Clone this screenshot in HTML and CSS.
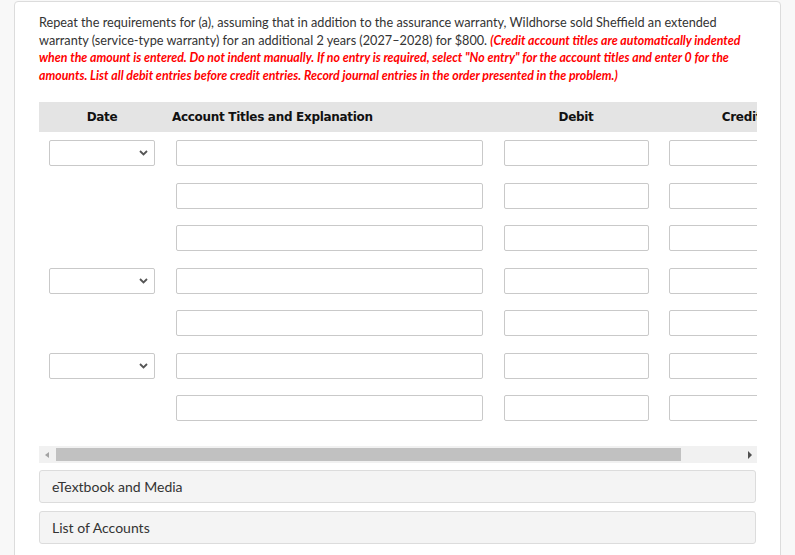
FILE: index.html
```html
<!DOCTYPE html>
<html>
<head>
<meta charset="utf-8">
<link rel="stylesheet" href="styles.css">
</head>
<body>
<div class="card">
  <p class="question">Repeat the requirements for (a), assuming that in addition to the assurance warranty, Wildhorse sold Sheffield an extended warranty (service-type warranty) for an additional 2 years (2027–2028) for $800. <span class="note">(Credit account titles are automatically indented when the amount is entered. Do not indent manually. If no entry is required, select "No entry" for the account titles and enter 0 for the amounts. List all debit entries before credit entries. Record journal entries in the order presented in the problem.)</span></p>

  <div class="scroller">
    <div class="journal">
      <div class="head">
        <div class="h-date">Date</div>
        <div class="h-acct">Account Titles and Explanation</div>
        <div class="h-debit">Debit</div>
        <div class="h-credit">Credit</div>
      </div>
      <div class="rows">
        <div class="row">
          <div class="c-date"><div class="select"><svg class="chev" width="9" height="6" viewBox="0 0 9 6"><path d="M1 1l3.5 3.5L8 1" fill="none" stroke="#555" stroke-width="1.8"/></svg></div></div>
          <div class="c-acct"><div class="field acct"></div></div>
          <div class="c-debit"><div class="field amt"></div></div>
          <div class="c-credit"><div class="field amt"></div></div>
        </div>
        <div class="row">
          <div class="c-date"></div>
          <div class="c-acct"><div class="field acct"></div></div>
          <div class="c-debit"><div class="field amt"></div></div>
          <div class="c-credit"><div class="field amt"></div></div>
        </div>
        <div class="row">
          <div class="c-date"></div>
          <div class="c-acct"><div class="field acct"></div></div>
          <div class="c-debit"><div class="field amt"></div></div>
          <div class="c-credit"><div class="field amt"></div></div>
        </div>
        <div class="row">
          <div class="c-date"><div class="select"><svg class="chev" width="9" height="6" viewBox="0 0 9 6"><path d="M1 1l3.5 3.5L8 1" fill="none" stroke="#555" stroke-width="1.8"/></svg></div></div>
          <div class="c-acct"><div class="field acct"></div></div>
          <div class="c-debit"><div class="field amt"></div></div>
          <div class="c-credit"><div class="field amt"></div></div>
        </div>
        <div class="row">
          <div class="c-date"></div>
          <div class="c-acct"><div class="field acct"></div></div>
          <div class="c-debit"><div class="field amt"></div></div>
          <div class="c-credit"><div class="field amt"></div></div>
        </div>
        <div class="row">
          <div class="c-date"><div class="select"><svg class="chev" width="9" height="6" viewBox="0 0 9 6"><path d="M1 1l3.5 3.5L8 1" fill="none" stroke="#555" stroke-width="1.8"/></svg></div></div>
          <div class="c-acct"><div class="field acct"></div></div>
          <div class="c-debit"><div class="field amt"></div></div>
          <div class="c-credit"><div class="field amt"></div></div>
        </div>
        <div class="row">
          <div class="c-date"></div>
          <div class="c-acct"><div class="field acct"></div></div>
          <div class="c-debit"><div class="field amt"></div></div>
          <div class="c-credit"><div class="field amt"></div></div>
        </div>
      </div>
    </div>
  </div>

  <div class="hbar">
    <span class="arrow-left"></span>
    <span class="thumb"></span>
    <span class="arrow-right"></span>
  </div>

  <div class="panel">eTextbook and Media</div>
  <div class="panel">List of Accounts</div>
</div>
</body>
</html>
```

FILE: styles.css
```css
html, body {
  margin: 0;
  padding: 0;
  background: #f8f8f8;
  overflow: hidden;
}

.card {
  margin: 1px 14px 0 14px;
  background: #fff;
  border: 1px solid #dcdcdc;
  border-radius: 4px;
  padding: 12px 24px 30px 24px;
  font-family: Lato, "Open Sans", sans-serif;
  color: #333;
}

.question {
  margin: 0;
  font-size: 12.7px;
  line-height: 17.5px;
  color: #333;
}

.note {
  color: #ff0000;
  font-weight: bold;
  font-style: italic;
  font-size: 12.35px;
}

.scroller {
  margin-top: 18px;
  width: 718px;
  overflow: hidden;
}

.journal {
  width: 785px;
}

.head {
  display: grid;
  grid-template-columns: 126px 328px 166px 165px;
  height: 30px;
  align-items: center;
  background: #e4e4e4;
  font-family: "DejaVu Sans", Verdana, sans-serif;
  font-weight: bold;
  font-size: 12px;
  color: #111;
  letter-spacing: -0.3px;
}

.h-date, .h-debit, .h-credit {
  text-align: center;
}

.h-acct {
  padding-left: 7px;
}

.rows {
  display: flex;
  flex-direction: column;
  gap: 16.5px;
  padding-top: 8px;
}

.row {
  display: grid;
  grid-template-columns: 126px 328px 166px 165px;
  height: 26px;
}

.select, .field {
  box-sizing: border-box;
  height: 26px;
  border: 1px solid #c9c9c9;
  border-radius: 2px;
  background: #fff;
}

.select {
  width: 106px;
  margin-left: 10px;
  display: flex;
  align-items: center;
  justify-content: flex-end;
  padding-right: 6px;
}

.acct {
  width: 307px;
  margin-left: 11px;
}

.c-debit .amt {
  width: 145px;
  margin-left: 11px;
}

.c-credit .amt {
  width: 145px;
  margin-left: 10px;
}

.hbar {
  margin-top: 25px;
  margin-bottom: 7px;
  width: 718px;
  height: 17px;
  background: #f1f1f1;
  display: flex;
  align-items: center;
  box-sizing: border-box;
  padding: 0 5px 0 6px;
}

.arrow-left {
  width: 0;
  height: 0;
  border-top: 3.5px solid transparent;
  border-bottom: 3.5px solid transparent;
  border-right: 4px solid #a3a3a3;
  margin-right: 7px;
}

.thumb {
  width: 625px;
  height: 13px;
  background: #c1c1c1;
}

.arrow-right {
  width: 0;
  height: 0;
  border-top: 4px solid transparent;
  border-bottom: 4px solid transparent;
  border-left: 4px solid #505050;
  margin-left: auto;
}

.panel {
  box-sizing: border-box;
  height: 33px;
  background: #f4f4f4;
  border: 1px solid #dcdcdc;
  border-radius: 3px;
  padding-left: 12px;
  display: flex;
  align-items: center;
  font-size: 14px;
  color: #333;
}

.panel + .panel {
  margin-top: 8px;
}
```
